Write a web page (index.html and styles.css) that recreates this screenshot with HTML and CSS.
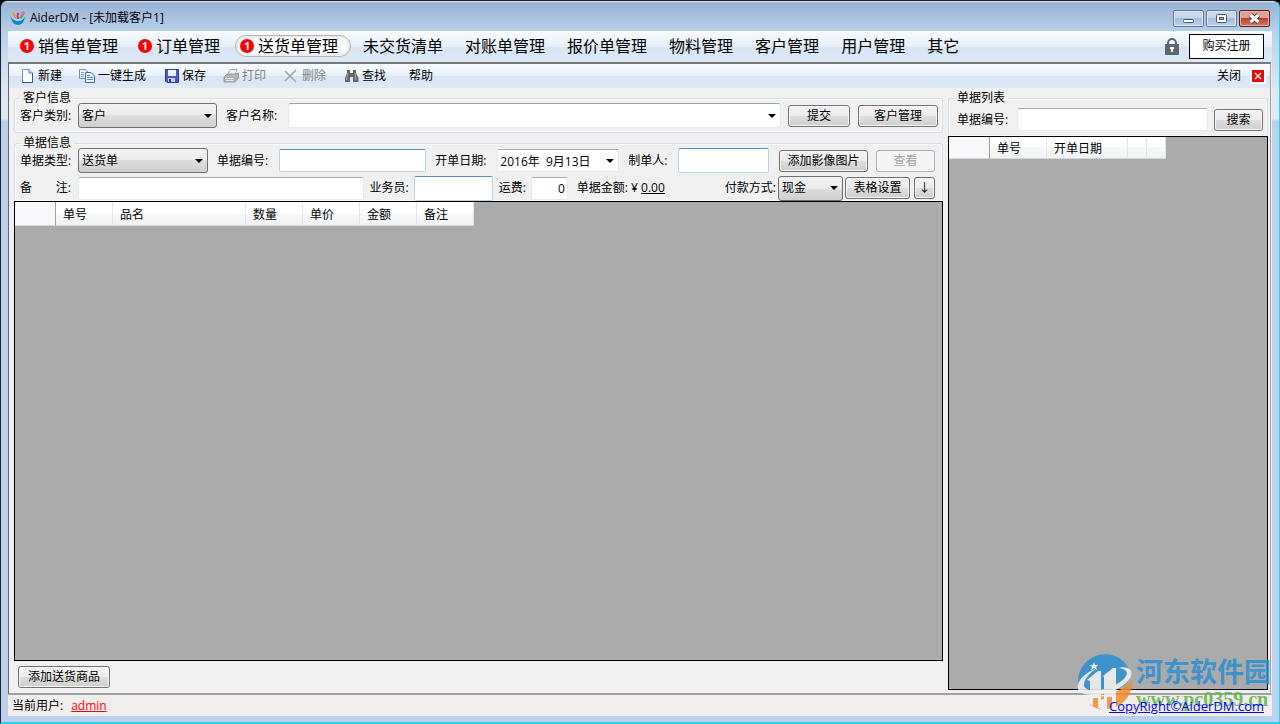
FILE: index.html
```html
<!DOCTYPE html>
<html lang="zh-CN">
  <head>
    <meta charset="UTF-8" />
    <meta name="viewport" content="width=device-width, initial-scale=1.0" />
    <title>AiderDM - [未加载客户1]</title>
    <link rel="stylesheet" href="styles.css">
  </head>
  <body>
    <div class="window">
      <header class="titlebar">
        <svg class="app-icon" viewBox="0 0 16 16" aria-hidden="true">
          <path d="M0 5 C1 9 4 10.500 8 10.500 C11 10.500 13 9 15 7 C14.500 12 11 15 8 15 C4 15 1 11 0 5z" fill="#1583c4" />
          <path d="M2 8 C5 11.500 11 12 14 8 C11 9.500 6 10 2 8z" fill="#a9e0f5" />
          <path d="M3 3 L6 8" stroke="#f7941d" stroke-width="2" />
          <path d="M7.500 5 L8 9" stroke="#e91e8c" stroke-width="2" />
          <path d="M13 4 L10.500 8.500" stroke="#3fb54a" stroke-width="2.500" />
          <circle cx="8" cy="4" r="1.300" fill="#e91e8c" />
          <circle cx="13" cy="3" r="1.800" fill="#ef5fb0" />
        </svg>
        <h1>AiderDM - [未加载客户1]</h1>
        <div class="controls">
          <button type="button" aria-label="最小化">
            <svg viewBox="0 0 29 15"><rect x="9.500" y="8.500" width="10" height="3" rx="1" fill="#fff" stroke="#4d5566" /></svg>
          </button>
          <button type="button" aria-label="最大化">
            <svg viewBox="0 0 29 15"><rect x="9.500" y="3.500" width="10" height="8" rx="1" fill="#fff" stroke="#4d5566" /><rect x="12.500" y="6.500" width="4" height="2" fill="#9db5d0" stroke="#4d5566" /></svg>
          </button>
          <button type="button" class="close" aria-label="关闭窗口">
            <svg viewBox="0 0 29 15"><path d="M10.500 4 L18.500 11 M18.500 4 L10.500 11" stroke="#4d4455" stroke-width="5" /><path d="M10.500 4 L18.500 11 M18.500 4 L10.500 11" stroke="#fff" stroke-width="3" /></svg>
          </button>
        </div>
      </header>

      <div class="client">
        <nav class="menu">
          <a href="#" class="has-badge"><span class="badge">1</span>销售单管理</a>
          <a href="#" class="has-badge"><span class="badge">1</span>订单管理</a>
          <a href="#" class="has-badge active"><span class="badge">1</span>送货单管理</a>
          <a href="#">未交货清单</a>
          <a href="#">对账单管理</a>
          <a href="#">报价单管理</a>
          <a href="#">物料管理</a>
          <a href="#">客户管理</a>
          <a href="#">用户管理</a>
          <a href="#">其它</a>
          <svg class="lock" viewBox="0 0 14 17" aria-hidden="true">
            <path d="M3 7 V5 A4 4 0 0 1 11 5 V7" fill="none" stroke="#5f666e" stroke-width="2" />
            <rect x="0" y="6" width="14" height="11" fill="#5f666e" />
            <path d="M5 9 H9 V11 H8 V14 H6 V11 H5z" fill="#fff" />
          </svg>
          <button type="button" class="register">购买注册</button>
        </nav>

        <div class="panel">
          <div class="toolbar">
            <button type="button">
              <svg viewBox="0 0 16 16"><path d="M3.500 1.500 H10 L13.500 5 V14.500 H3.500z" fill="#fafdff" stroke="#7f93b2" /><path d="M13.500 5 V14.500 H3.500" fill="none" stroke="#3d567d" /><path d="M10 1.500 V5 H13.500" fill="#dce6f2" stroke="#5b7398" /></svg>
              新建
            </button>
            <button type="button">
              <svg viewBox="0 0 16 16"><path d="M.5 1.500 H6 L9.500 4.500 V10.500 H.5z" fill="#f4f9ff" stroke="#6d8fc9" /><path d="M2 4.500 H5 M2 6.500 H5 M2 8.500 H5" stroke="#6d9be0" /><path d="M6.500 4.500 H12 L15.500 8 V14.500 H6.500z" fill="#f4f9ff" stroke="#3b66b5" /><path d="M8 7.500 H11 M8 9.500 H14 M8 11.500 H14" stroke="#4c83d8" /></svg>
              一键生成
            </button>
            <button type="button">
              <svg viewBox="0 0 16 16"><path d="M2.500 1.500 H15.500 V14.500 H4 L2.500 13z" fill="#4c58c6" stroke="#333a94" /><rect x="5" y="2" width="8" height="6" fill="#eef2fc" /><rect x="5" y="10" width="7" height="4" fill="#c9d0e6" /><rect x="6" y="11" width="2" height="3" fill="#262e76" /></svg>
              保存
            </button>
            <button type="button" disabled>
              <svg viewBox="0 0 16 16"><path d="M5 6 L7 1.500 H14 L12 6" fill="#f2f2f2" stroke="#a8a8a8" /><path d="M1 9 L4 6 H13 L15.500 5 V10 L12 14 H1z" fill="#b5b5b5" stroke="#989898" /><path d="M2 10.500 H11 M3 12.500 H10" stroke="#e8e8e8" /></svg>
              打印
            </button>
            <button type="button" disabled>
              <svg viewBox="0 0 16 16"><path d="M2 3 L13 14 M13 2 L2 13" fill="none" stroke="#a3a3a3" stroke-width="1.500" /></svg>
              删除
            </button>
            <button type="button">
              <svg viewBox="0 0 16 16"><path d="M4 2 H7 V5 H10 V2 H13 V5 L15.500 10 V14 H10 V9 H7 V14 H2 V10 L4 5z" fill="#666" /><path d="M4.500 5 L3.500 12 M12 5 L13 12" stroke="#aaa" /></svg>
              查找
            </button>
            <button type="button" class="help">帮助</button>
            <button type="button" class="exit">
              关闭
              <svg viewBox="0 0 16 16"><rect width="16" height="16" fill="#fff" /><rect x="2" y="2" width="12" height="12" fill="#e60b0b" /><path d="M5 5 L11 11 M11 5 L5 11" stroke="#fff" stroke-width="1.200" /></svg>
            </button>
          </div>

          <div class="content">
            <main>
              <fieldset>
                <legend>客户信息</legend>
                <div class="row">
                  <label class="first" for="khlb">客户类别:</label>
                  <select id="khlb" class="w-type"><option>客户</option></select>
                  <label class="lead" for="khmc">客户名称:</label>
                  <select id="khmc" class="customer"><option></option></select>
                  <button type="button" class="btn submit">提交</button>
                  <button type="button" class="btn manage">客户管理</button>
                </div>
              </fieldset>

              <fieldset class="bill">
                <legend>单据信息</legend>
                <div class="row">
                  <label class="first" for="djlx">单据类型:</label>
                  <select id="djlx" class="w-bill"><option>送货单</option></select>
                  <label class="lead" for="djbh">单据编号:</label>
                  <input type="text" id="djbh" class="number hot" />
                  <label class="lead" for="kdrq">开单日期:</label>
                  <input type="text" id="kdrq" class="date" value="2016年  9月13日" />
                  <label class="lead" for="zdr">制单人:</label>
                  <input type="text" id="zdr" class="maker tall hot" />
                  <button type="button" class="btn image">添加影像图片</button>
                  <button type="button" class="btn view" disabled>查看</button>
                </div>
                <div class="row second">
                  <label class="first remark" for="bz"><span>备</span><span>注:</span></label>
                  <input type="text" id="bz" class="note" />
                  <label for="ywy">业务员:</label>
                  <input type="text" id="ywy" class="sales tall hot" />
                  <label for="yf">运费:</label>
                  <input type="text" id="yf" class="freight" value="0" />
                  <span class="amount">单据金额: ¥ <u>0.00</u></span>
                  <label class="pay" for="fkfs">付款方式:</label>
                  <select id="fkfs" class="w-pay"><option>现金</option></select>
                  <button type="button" class="btn setup">表格设置</button>
                  <button type="button" class="btn down">↓</button>
                </div>
              </fieldset>

              <div class="grid">
                <table>
                  <colgroup><col class="c-head"><col class="c-cell"><col class="c-name"><col class="c-cell"><col class="c-cell"><col class="c-cell"><col class="c-cell"></colgroup>
                  <thead>
                    <tr><th></th><th>单号</th><th>品名</th><th>数量</th><th>单价</th><th>金额</th><th>备注</th></tr>
                  </thead>
                </table>
              </div>
              <button type="button" class="btn add">添加送货商品</button>
            </main>

            <aside>
              <fieldset class="list">
                <legend>单据列表</legend>
                <div class="row">
                  <label for="ssbh">单据编号:</label>
                  <input type="text" id="ssbh" class="search" />
                  <button type="button" class="btn find">搜索</button>
                </div>
              </fieldset>
              <div class="grid">
                <table class="short">
                  <colgroup><col class="c-head"><col class="c-cell"><col class="c-date"><col class="c-tiny"><col class="c-tiny"></colgroup>
                  <thead>
                    <tr><th></th><th>单号</th><th>开单日期</th><th></th><th></th></tr>
                  </thead>
                </table>
              </div>
            </aside>
          </div>
        </div>

        <footer class="status">
          <span>当前用户:</span>
          <a href="#" class="user">admin</a>
          <a href="#" class="copyright">CopyRight©AiderDM.com</a>
        </footer>
      </div>

      <div class="watermark">
        <svg viewBox="0 0 58 58" aria-hidden="true">
          <path d="M2 29 A27 27 0 0 1 55 21 C54 34 36 40 18 41 C8 41 3 36 2 29z" fill="#2b8fd0" />
          <path d="M14 45 C32 44 48 37 56 27 C57 41 48 52 36 55 V44 L32 45 V56 H28 V46 L24 47 V56 C20 55 17 54 14 52z" fill="#f08c2e" />
          <path d="M21 15 C8 20 0 29 2 36 C5 46 36 43 50 30 C61 20 54 12 42 15 C54 16 53 23 44 29 C31 38 10 40 8 33 C7 28 13 20 21 15z" fill="#f2f2f2" />
          <path d="M11 27 L22 18 H25 V55 H22 V45 H17 V53 L14 51 V28z" fill="#f2f2f2" />
          <path d="M27 23 L37 15 H40 V54 L36 55 V45 H31 V56 H28 V24z" fill="#f2f2f2" />
          <path d="M17 45 H22 V55 L17 53z M31 44 H36 V55 L31 56z" fill="#f08c2e" />
          <path d="M18 9 L19 12 L22 12 L20 14 L21 17 L18 15 L15 17 L16 14 L14 12 L17 12z" fill="#fff" />
        </svg>
        <div class="site">
          <strong>河东软件园</strong>
          <b>www.pc0359.cn</b>
        </div>
      </div>
    </div>
  </body>
</html>
```
FILE: styles.css
```css
* {
  box-sizing: border-box;
}

body {
  margin: 0;
  background: #000;
  color: #000;
  font-family: "Open Sans", "Noto Sans CJK SC", sans-serif;
  font-size: 12px;
  line-height: 16px;
}

button,
input,
select {
  margin: 0;
  font: inherit;
  color: inherit;
}

.window {
  position: relative;
  display: flex;
  flex-direction: column;
  height: 100vh;
  padding: 0 7px 6px;
  border: 1px solid #1c2230;
  border-right-color: #2fd0ee;
  border-bottom: 2px solid #2fd0ee;
  border-radius: 7px 7px 0 0;
  background: linear-gradient(#dfeaf5 0, #99b4d4 2px, #b9d1ea 32px, #dce8f5 90px, #dce8f5 118px, #b9d1ea 120px);
}

/* Title bar */
.titlebar {
  display: flex;
  align-items: center;
  height: 30px;
  padding: 4px 2px 0 2px;
}

.titlebar h1 {
  flex: 1;
  margin: 0 0 0 4px;
  font-size: 12px;
  font-weight: normal;
}

.app-icon {
  width: 16px;
  height: 16px;
}

.controls {
  display: flex;
  gap: 2px;
}

.controls button {
  width: 31px;
  height: 17px;
  padding: 0;
  border: 1px solid #5f7a9b;
  border-radius: 2px;
  background: linear-gradient(#c5d7ea 50%, #a5bed9 50%, #b9d0e8);
  box-shadow: inset 0 0 0 1px #dce8f4;
}

.controls .close {
  border-color: #5c1a1f;
  background: linear-gradient(#dfa097 50%, #bd422c 50%, #d4785c);
  box-shadow: inset 0 0 0 1px #e3b5ab;
}

.controls svg {
  display: block;
  width: 29px;
  height: 15px;
}

.client {
  display: flex;
  flex: 1;
  flex-direction: column;
  min-height: 0;
  background: #f0f0f0;
}

/* Main menu */
.menu {
  display: flex;
  align-items: center;
  gap: 2px;
  height: 31px;
  padding: 0 8px 1px 7px;
  background: linear-gradient(#fafdff, #e5eef8 50%, #d9e5f4 52%, #dde8f6);
}

.menu a {
  display: flex;
  align-items: center;
  height: 22px;
  padding: 0 9px;
  border: 1px solid transparent;
  border-radius: 11px;
  color: #000;
  font-size: 16px;
  line-height: 20px;
  text-decoration: none;
  white-space: nowrap;
}

.menu .has-badge {
  gap: 4px;
  padding: 0 12px 0 4px;
}

.menu .active {
  border-color: #b5b5b5;
  background: #fff;
  box-shadow: inset 0 0 4px #ccc;
}

.badge {
  width: 14px;
  height: 14px;
  border-radius: 7px;
  background: #f00;
  color: #fff;
  font-size: 11px;
  font-weight: bold;
  line-height: 14px;
  text-align: center;
}

.lock {
  width: 14px;
  height: 17px;
  margin-left: auto;
}

.register {
  width: 75px;
  height: 25px;
  margin-left: 8px;
  padding: 0;
  border: 1px solid #000;
  background: #fff;
}

/* Form area */
.panel {
  display: flex;
  flex: 1;
  flex-direction: column;
  min-height: 0;
  margin-right: 1px;
  border: 1px solid #a0a0a0;
  border-top: 2px solid #777;
  border-left-color: #696969;
}

.toolbar {
  display: flex;
  align-items: center;
  gap: 17px;
  height: 24px;
  padding: 0 4px 0 10px;
  background: linear-gradient(#fafdff, #e6eff9 50%, #d9e5f4 52%, #dde8f6);
}

.toolbar button {
  display: flex;
  align-items: center;
  gap: 3px;
  padding: 0;
  border: none;
  background: none;
  white-space: nowrap;
}

.toolbar svg {
  width: 16px;
  height: 16px;
}

.toolbar button:disabled {
  color: #838383;
}

.toolbar .help {
  margin-left: 6px;
}

.toolbar .exit {
  gap: 9px;
  margin-left: auto;
}

.content {
  display: flex;
  flex: 1;
  gap: 5px;
  min-height: 0;
  padding: 5px 2px 3px 5px;
}

main,
aside {
  display: flex;
  flex-direction: column;
}

main {
  flex: 1;
  min-width: 0;
}

aside {
  width: 320px;
}

fieldset {
  min-width: 0;
  margin: 0 0 5px;
  padding: 0 4px 4px 5px;
  border: 1px solid #d5dfe5;
  border-radius: 3px;
  box-shadow: inset 0 0 0 1px #f8f8f8;
}

legend {
  padding: 0 3px;
  line-height: 10px;
}

fieldset.bill,
fieldset.list {
  margin: 0;
  padding-bottom: 0;
  border-bottom: none;
}

fieldset.bill {
  padding-right: 7px;
}

.row {
  display: flex;
  align-items: center;
  height: 25px;
  white-space: nowrap;
}

.row.second {
  height: 28px;
  padding-top: 2px;
}

.first {
  width: 58px;
}

.lead {
  margin-left: 9px;
}

.remark {
  display: flex;
  justify-content: space-between;
  padding-right: 7px;
}

input {
  min-width: 0;
  height: 23px;
  padding: 0 2px;
  border: 1px solid #e3e9ef;
  border-top-color: #abadb3;
  border-radius: 2px;
  outline: none;
  background: #fff;
}

.hot {
  border-color: #b7d5ea;
  border-top-color: #5a8fbd;
}

.tall {
  height: 25px;
}

select {
  height: 25px;
  padding: 0 18px 0 3px;
  border: 1px solid #707070;
  border-radius: 3px;
  appearance: none;
  background: url("data:image/svg+xml,%3Csvg xmlns='http://www.w3.org/2000/svg' width='8' height='4'%3E%3Cpath d='M0 0h8L4 4z'/%3E%3C/svg%3E") no-repeat right 4px center, linear-gradient(#f2f2f2, #ebebeb 50%, #ddd 50%, #cfcfcf);
}

.customer,
.date {
  background: #fff url("data:image/svg+xml,%3Csvg xmlns='http://www.w3.org/2000/svg' width='8' height='4'%3E%3Cpath d='M0 0h8L4 4z'/%3E%3C/svg%3E") no-repeat right 4px center;
}

.customer {
  flex: 1;
  min-width: 0;
  margin: 0 7px 0 11px;
  border-color: #e3e9ef;
  border-top-color: #8fa6ba;
}

.w-type {
  width: 139px;
}

.w-bill {
  width: 130px;
}

.w-pay {
  width: 65px;
  margin: 0 2px;
}

.number {
  width: 147px;
  margin-left: 11px;
}

.date {
  width: 122px;
  margin-left: 11px;
}

.maker {
  width: 91px;
  margin-left: 11px;
}

.note {
  flex: 1;
  margin-right: 6px;
}

.sales {
  width: 79px;
  margin: 0 6px 0 5px;
}

.freight {
  width: 37px;
  margin: 0 9px 0 5px;
  text-align: right;
}

.pay {
  margin-left: 60px;
}

.btn {
  height: 22px;
  padding: 0;
  border: 1px solid #707070;
  border-radius: 3px;
  background: linear-gradient(#f2f2f2, #ebebeb 50%, #ddd 50%, #cfcfcf);
  box-shadow: inset 0 0 0 1px #f8f8f8;
  white-space: nowrap;
}

.btn:disabled {
  border-color: #adb2b5;
  background: #f4f4f4;
  color: #a0a0a0;
}

.submit {
  width: 62px;
}

.manage {
  width: 80px;
  margin-left: 8px;
}

.image {
  width: 89px;
  margin-left: auto;
}

.view {
  width: 59px;
  margin-left: 8px;
}

.setup {
  width: 65px;
}

.down {
  width: 21px;
  margin-left: 4px;
}

.add {
  width: 92px;
  margin: 5px 0 2px 4px;
}

.list .row {
  height: 33px;
  padding-left: 3px;
}

.search {
  flex: 1;
  margin: 0 6px 0 9px;
}

.find {
  width: 49px;
}

/* Data grids */
.grid {
  flex: 1;
  min-height: 0;
  border: 1px solid #000;
  background: #ababab;
}

table {
  table-layout: fixed;
  width: 459px;
  border-collapse: separate;
  border-spacing: 0;
}

.short {
  width: 217px;
}

th {
  height: 24px;
  padding: 2px 0 0 7px;
  border-right: 1px solid #e3e4e6;
  border-bottom: 1px solid #d5d5d5;
  background: linear-gradient(#fff 50%, #f6f7f9 50%, #f2f3f5);
  font-weight: normal;
  text-align: left;
}

.short th {
  height: 22px;
}

th:first-child {
  border-right-color: #a0a0a0;
  background: #f8f8fa;
}

.c-head {
  width: 41px;
}

.c-cell {
  width: 57px;
}

.c-name {
  width: 133px;
}

.c-date {
  width: 81px;
}

.c-tiny {
  width: 19px;
}

/* Status bar */
.status {
  display: flex;
  align-items: center;
  gap: 8px;
  height: 22px;
  padding: 0 8px 0 4px;
  border-top: 1px solid #a0a0a0;
  background: #f1edec;
}

.user {
  color: #f00;
}

.copyright {
  z-index: 2;
  margin-left: auto;
  color: #00f;
  font-size: 13px;
}

.watermark {
  position: absolute;
  right: 8px;
  bottom: 11px;
  display: flex;
  gap: 2px;
  opacity: 0.85;
  pointer-events: none;
}

.watermark svg {
  width: 58px;
  height: 58px;
}

.site {
  display: flex;
  flex-direction: column;
}

.site strong {
  color: #2b8fd0;
  font-family: "Noto Sans CJK SC", sans-serif;
  font-size: 27px;
  line-height: 36px;
}

.site b {
  color: #5cb548;
  font-family: "Liberation Serif", serif;
  font-size: 20px;
  line-height: 20px;
}
```
